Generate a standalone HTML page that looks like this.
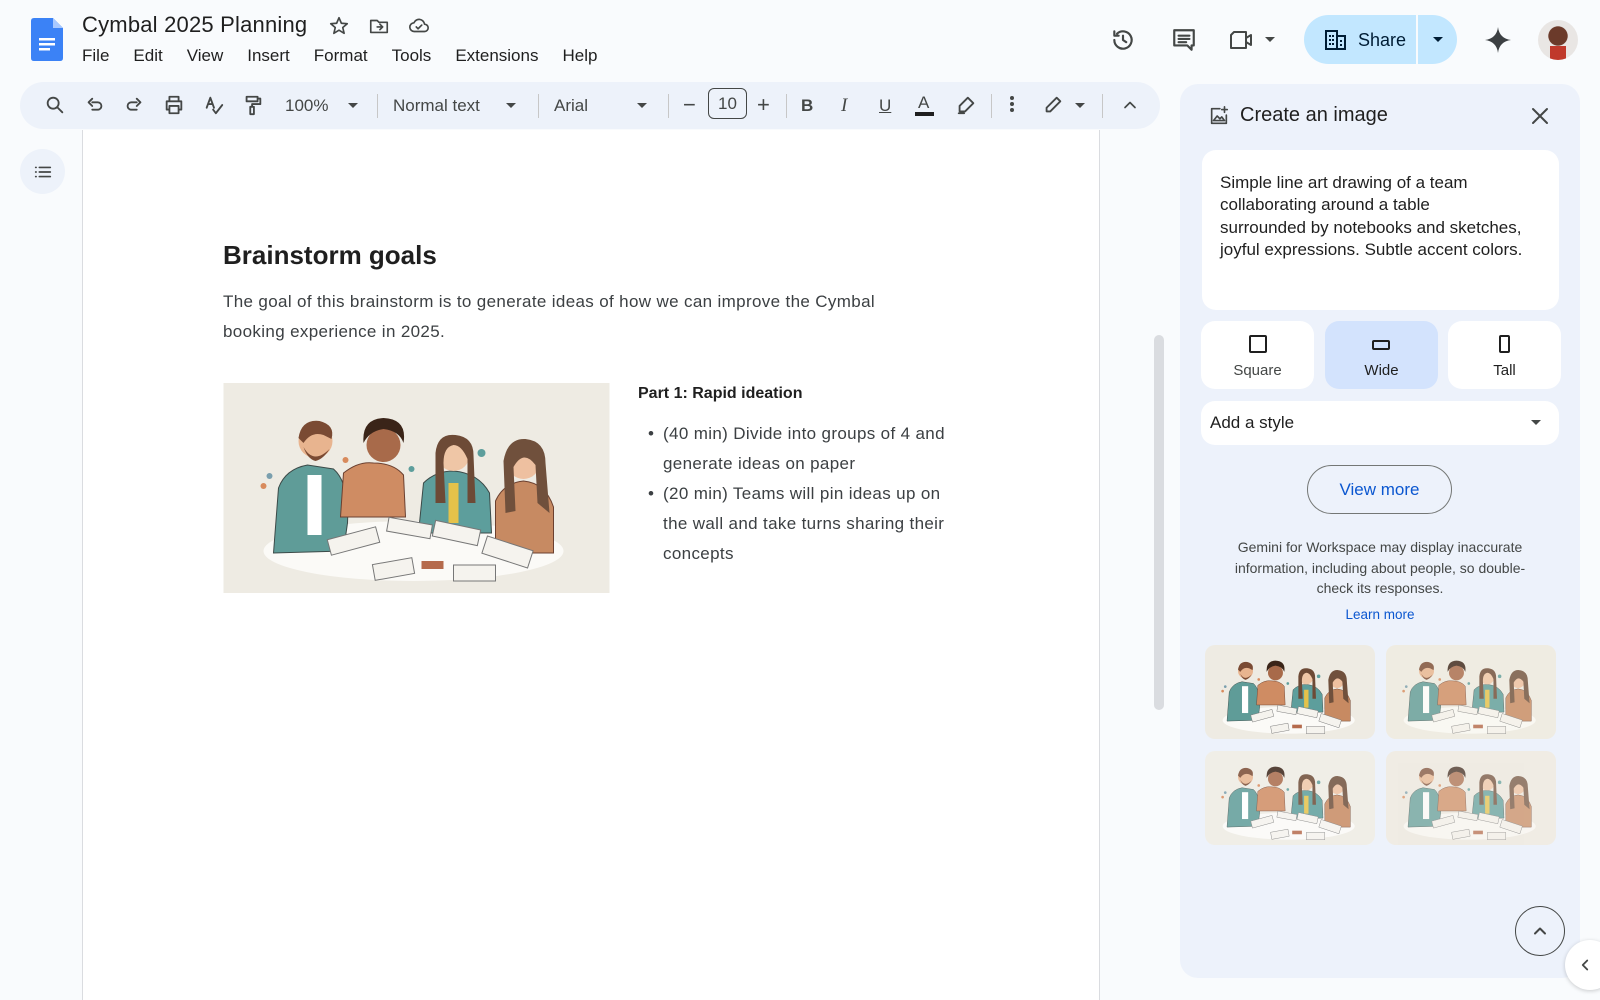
<!DOCTYPE html>
<html><head><meta charset="utf-8"><style>
*{box-sizing:border-box;margin:0;padding:0}
body{width:1600px;height:1000px;overflow:hidden;background:#f9fbfd;font-family:"Liberation Sans",Arial,sans-serif;color:#1f1f1f;position:relative}
.a{position:absolute}
.ic{position:absolute;fill:none;stroke:#444746;stroke-width:2;stroke-linecap:round;stroke-linejoin:round}
.menu span{margin-right:24px}
.tb{position:absolute;top:82px;left:20px;width:1140px;height:47px;background:#edf2fa;border-radius:24px}
.sep{position:absolute;top:12px;width:1px;height:24px;background:#c7c7c7}
.t{position:absolute;font-size:17px;color:#444746;top:14px}
.car{position:absolute;top:21px;width:0;height:0;border-left:5px solid transparent;border-right:5px solid transparent;border-top:5px solid #444746}
.doc{position:absolute;left:82px;top:130px;width:1018px;height:870px;background:#fff;border-left:1px solid #dadce0;border-right:1px solid #dadce0}
.p{font-size:17px;color:#3c4043;line-height:30px;letter-spacing:0.35px}
.panel{position:absolute;left:1180px;top:84px;width:400px;height:894px;background:#edf2fb;border-radius:18px}
.card{position:absolute;background:#fff;border-radius:14px}
.thumb{position:absolute;width:170px;height:94px;border-radius:10px;overflow:hidden}
</style></head><body>
<svg width="0" height="0" style="position:absolute"><defs>
<symbol id="scene" viewBox="0 0 386 210">
<rect width="386" height="210" fill="#eeebe3"/>
<ellipse cx="190" cy="168" rx="150" ry="30" fill="#fbfaf7"/>
<path d="M50 170 L55 105 Q62 86 84 82 L110 86 Q126 100 124 140 L120 168Z" fill="#5f9c98" stroke="#3c4a48"/>
<rect x="84" y="92" width="14" height="60" fill="#fff"/>
<circle cx="92" cy="58" r="17" fill="#e8b48f"/>
<path d="M75 55 Q78 36 96 38 Q112 42 108 56 L100 52 Q88 48 80 60Z" fill="#7a4a33"/>
<path d="M80 64 Q90 82 106 66 Q100 76 92 78 Q84 76 80 64Z" fill="#7a4a33"/>
<path d="M117 134 L120 90 Q135 78 150 80 Q170 80 180 92 L182 134Z" fill="#cf8c63" stroke="#6b4030"/>
<circle cx="160" cy="62" r="17" fill="#a86a4a"/>
<path d="M140 60 Q138 36 160 35 Q184 36 180 60 Q176 48 160 46 Q146 48 140 60Z" fill="#3a2418"/>
<path d="M195 150 L200 100 Q212 88 230 88 Q255 90 266 110 L268 150Z" fill="#5d9e9c" stroke="#3c4a48"/>
<rect x="225" y="100" width="10" height="40" fill="#e5c24a"/>
<circle cx="230" cy="72" r="16" fill="#efc6a6"/>
<path d="M212 120 L212 70 Q214 50 232 52 Q250 54 250 72 L252 120 L244 120 L244 76 Q238 62 230 62 Q220 64 220 80 L222 120Z" fill="#6d4a36"/>
<path d="M272 170 L272 118 Q280 100 300 98 Q322 100 330 124 L330 170Z" fill="#c78a62" stroke="#6b4030"/>
<circle cx="300" cy="80" r="16" fill="#eec0a0"/>
<path d="M282 130 L280 78 Q284 55 302 56 Q322 58 322 80 L326 130 L314 120 L312 82 Q300 66 290 84 L292 128Z" fill="#70503c"/>
<rect x="105" y="150" width="50" height="16" fill="#f5f3ee" stroke="#777" transform="rotate(-15 130 158)"/>
<rect x="164" y="138" width="44" height="14" fill="#f5f3ee" stroke="#777" transform="rotate(10 186 145)"/>
<rect x="210" y="142" width="46" height="16" fill="#f5f3ee" stroke="#777" transform="rotate(12 233 150)"/>
<rect x="150" y="178" width="40" height="16" fill="#f5f3ee" stroke="#777" transform="rotate(-10 170 186)"/>
<rect x="230" y="182" width="42" height="16" fill="#f5f3ee" stroke="#777"/>
<rect x="260" y="160" width="48" height="18" fill="#f5f3ee" stroke="#777" transform="rotate(18 284 169)"/>
<rect x="198" y="178" width="22" height="8" fill="#b56a4c"/>
<circle cx="46" cy="93" r="3" fill="#7a9fae"/><circle cx="40" cy="103" r="3" fill="#d88a5c"/><circle cx="122" cy="77" r="3" fill="#d88a5c"/><circle cx="188" cy="86" r="3" fill="#5d9e9c"/><circle cx="258" cy="70" r="4" fill="#5d9e9c"/>
</symbol>
</defs></svg>

<!-- header -->
<svg class="a" style="left:31px;top:18px" width="32" height="43" viewBox="0 0 32 43"><path d="M3 0H22L32 10V40Q32 43 29 43H3Q0 43 0 40V3Q0 0 3 0Z" fill="#3b82f6"/><path d="M22 0V10H32Z" fill="#a7c8ff"/><rect x="8" y="20" width="16" height="2.5" fill="#fff"/><rect x="8" y="25" width="16" height="2.5" fill="#fff"/><rect x="8" y="30" width="11" height="2.5" fill="#fff"/></svg>
<div class="a" style="left:82px;top:12px;font-size:22px;color:#1f1f1f;letter-spacing:0.2px">Cymbal 2025 Planning</div>
<svg class="ic" style="left:328px;top:15px" width="22" height="22" viewBox="0 0 24 24"><path d="M12 3l2.6 6 6.4.5-4.9 4.2 1.5 6.3L12 16.6 6.4 20l1.5-6.3L3 9.5l6.4-.5z" stroke-width="1.8"/></svg>
<svg class="ic" style="left:368px;top:15px" width="22" height="22" viewBox="0 0 24 24"><path d="M3 6h7l2 2h9v11H3z M10 13h6 M13 10l3 3-3 3" stroke-width="1.8"/></svg>
<svg class="ic" style="left:407px;top:15px" width="24" height="22" viewBox="0 0 24 24"><path d="M7 18h11a4 4 0 0 0 0-8 6 6 0 0 0-11.5-1.5A4.5 4.5 0 0 0 7 18z M9 13l2 2 4-4" stroke-width="1.8"/></svg>
<div class="a menu" style="left:82px;top:46px;font-size:17px;color:#1f1f1f"><span>File</span><span>Edit</span><span>View</span><span>Insert</span><span>Format</span><span>Tools</span><span>Extensions</span><span>Help</span></div>

<svg class="ic" style="left:1110px;top:27px" width="26" height="26" viewBox="0 0 24 24"><path d="M4 12a8 8 0 1 0 2.5-5.8 M4 4v4h4 M12 8v4l3 2"/></svg>
<svg class="ic" style="left:1171px;top:27px" width="26" height="26" viewBox="0 0 24 24"><path d="M3 3h18v14h-2v4l-4-4H3z M7 8h10 M7 11h10 M7 14h7"/></svg>
<svg class="ic" style="left:1228px;top:28px" width="28" height="24" viewBox="0 0 28 24"><path d="M6 4h12v16H3V7z M18 10l5-3v10l-5-3"/></svg>
<div class="car" style="left:1265px;top:37px"></div>
<div class="a" style="left:1304px;top:15px;width:153px;height:49px;background:#c2e7ff;border-radius:25px"></div>
<div class="a" style="left:1416px;top:15px;width:2px;height:49px;background:#f9fbfd"></div>
<svg class="a" style="left:1325px;top:30px" width="22" height="20" viewBox="0 0 22 20"><path d="M1 1h11v18H1z M12 6h8v13h-8" fill="none" stroke="#001d35" stroke-width="2"/><rect x="4" y="5" width="2" height="2" fill="#001d35"/><rect x="7" y="5" width="2" height="2" fill="#001d35"/><rect x="4" y="9" width="2" height="2" fill="#001d35"/><rect x="7" y="9" width="2" height="2" fill="#001d35"/><rect x="4" y="13" width="2" height="2" fill="#001d35"/><rect x="7" y="13" width="2" height="2" fill="#001d35"/><rect x="15" y="10" width="2" height="2" fill="#001d35"/><rect x="15" y="14" width="2" height="2" fill="#001d35"/></svg>
<div class="a" style="left:1358px;top:30px;font-size:18px;color:#001d35">Share</div>
<div class="car" style="left:1433px;top:37px;border-top-color:#001d35"></div>
<svg class="a" style="left:1485px;top:27px" width="26" height="26" viewBox="0 0 24 24"><path d="M12 0C12.8 7 17 11.2 24 12C17 12.8 12.8 17 12 24C11.2 17 7 12.8 0 12C7 11.2 11.2 7 12 0Z" fill="#3c4043"/></svg>
<div class="a" style="left:1538px;top:20px;width:40px;height:40px;border-radius:50%;background:radial-gradient(circle at 50% 40%,#6b3a2a 0 30%,#e9e6e4 32%);overflow:hidden"><div class="a" style="left:12px;top:26px;width:16px;height:14px;background:#c0392b"></div></div>

<!-- toolbar -->
<div class="tb">
<svg class="ic" style="left:24px;top:12px" width="22" height="22" viewBox="0 0 24 24"><circle cx="10" cy="10" r="6"/><path d="M15 15l5 5"/></svg>
<svg class="ic" style="left:64px;top:13px" width="22" height="22" viewBox="0 0 24 24"><path d="M9 8H15a4 4 0 0 1 0 8H9 M9 4L5 8l4 4"/></svg>
<svg class="ic" style="left:103px;top:13px" width="22" height="22" viewBox="0 0 24 24"><path d="M15 8H9a4 4 0 0 0 0 8h6 M15 4l4 4-4 4"/></svg>
<svg class="ic" style="left:143px;top:12px" width="22" height="22" viewBox="0 0 24 24"><path d="M7 8V3h10v5 M4 8h16v9h-3 M7 17H4V8 M7 13h10v8H7z"/></svg>
<svg class="ic" style="left:183px;top:12px" width="22" height="22" viewBox="0 0 24 24"><path d="M4 15L8 4l4 11 M5.5 11h5 M11 17l3 4 7-9"/></svg>
<svg class="ic" style="left:222px;top:11px" width="22" height="24" viewBox="0 0 24 24"><path d="M5 3h12v5H5z M17 5h3v6h-9v3 M9 14h4v8H9z"/></svg>
<div class="t" style="left:265px">100%</div><div class="car" style="left:328px"></div>
<div class="sep" style="left:357px"></div>
<div class="t" style="left:373px">Normal text</div><div class="car" style="left:486px"></div>
<div class="sep" style="left:518px"></div>
<div class="t" style="left:534px">Arial</div><div class="car" style="left:617px"></div>
<div class="sep" style="left:648px"></div>
<div class="t" style="left:663px;font-size:22px;top:10px">−</div>
<div class="a" style="left:688px;top:6px;width:39px;height:31px;border:1px solid #444746;border-radius:6px;font-size:17px;color:#444746;text-align:center;line-height:29px">10</div>
<div class="t" style="left:737px;font-size:22px;top:10px">+</div>
<div class="sep" style="left:766px"></div>
<div class="t" style="left:781px;font-weight:bold;color:#444746">B</div>
<div class="t" style="left:821px;font-style:italic;font-family:'Liberation Serif',serif;font-size:19px;top:13px">I</div>
<div class="t" style="left:859px;text-decoration:underline">U</div>
<div class="t" style="left:898px;top:11px">A</div><div class="a" style="left:895px;top:30px;width:19px;height:4px;background:#1f1f1f"></div>
<svg class="ic" style="left:935px;top:12px" width="22" height="22" viewBox="0 0 24 24"><path d="M14 4l6 6-9 9H5v-6z M4 21h6"/></svg>
<div class="sep" style="left:971px"></div>
<div class="a" style="left:990px;top:14px;width:4px;height:4px;border-radius:2px;background:#444746;box-shadow:0 6px #444746,0 12px #444746"></div>
<svg class="ic" style="left:1022px;top:12px" width="22" height="22" viewBox="0 0 24 24"><path d="M16 4l4 4L9 19H5v-4z"/></svg>
<div class="car" style="left:1055px"></div>
<div class="sep" style="left:1082px"></div>
<svg class="ic" style="left:1100px;top:13px" width="20" height="20" viewBox="0 0 24 24"><path d="M6 15l6-6 6 6"/></svg>
</div>

<div class="a" style="left:20px;top:149px;width:45px;height:45px;border-radius:50%;background:#edf2fa"></div>
<svg class="ic" style="left:32px;top:161px" width="22" height="22" viewBox="0 0 24 24"><path d="M8 7h12 M8 12h12 M8 17h12 M4 7h.5 M4 12h.5 M4 17h.5" stroke-width="1.8"/></svg>

<!-- doc -->
<div class="doc">
<div class="a" style="left:140px;top:110px;font-size:26px;font-weight:bold;color:#1f1f1f">Brainstorm goals</div>
<div class="a p" style="left:140px;top:157px;width:760px">The goal of this brainstorm is to generate ideas of how we can improve the Cymbal<br>booking experience in 2025.</div>
<svg class="a" style="left:140px;top:253px" width="387" height="210"><use href="#scene"/></svg>
<div class="a" style="left:555px;top:255px;font-size:16px;font-weight:bold;color:#1f1f1f">Part 1: Rapid ideation</div>
<div class="a p" style="left:565px;top:289px;width:300px">•</div>
<div class="a p" style="left:565px;top:349px">•</div>
<div class="a p" style="left:580px;top:289px;width:320px">(40 min) Divide into groups of 4 and<br>generate ideas on paper<br>(20 min) Teams will pin ideas up on<br>the wall and take turns sharing their<br>concepts</div>
</div>
<div class="a" style="left:1154px;top:335px;width:10px;height:375px;background:#dadce0;border-radius:5px"></div>

<!-- panel -->
<div class="panel">
<svg class="ic" style="left:28px;top:21px" width="22" height="22" viewBox="0 0 24 24"><path d="M13 4H4v16h16v-9 M6 17l4-5 3 3 2-2 3 4z M18 2v6 M15 5h6" stroke-width="1.8"/></svg>
<div class="a" style="left:60px;top:20px;font-size:20px;color:#1f1f1f">Create an image</div>
<svg class="ic" style="left:348px;top:20px" width="24" height="24" viewBox="0 0 24 24"><path d="M5 5l14 14 M19 5L5 19"/></svg>
<div class="card" style="left:22px;top:66px;width:357px;height:160px"></div>
<div class="a" style="left:40px;top:88px;font-size:17px;line-height:22.4px;color:#1f1f1f;width:330px">Simple line art drawing of a team<br>collaborating around a table<br>surrounded by notebooks and sketches,<br>joyful expressions. Subtle accent colors.</div>
<div class="card" style="left:21px;top:237px;width:113px;height:68px"></div>
<div class="card" style="left:145px;top:237px;width:113px;height:68px;background:#d3e3fd"></div>
<div class="card" style="left:268px;top:237px;width:113px;height:68px"></div>
<div class="a" style="left:69px;top:251px;width:18px;height:18px;border:2px solid #1f1f1f;border-radius:2px"></div>
<div class="a" style="left:192px;top:256px;width:18px;height:10px;border:2px solid #1f1f1f;border-radius:2px"></div>
<div class="a" style="left:319px;top:251px;width:11px;height:18px;border:2px solid #1f1f1f;border-radius:2px"></div>
<div class="a" style="left:21px;top:278px;width:113px;text-align:center;font-size:15px;color:#444746">Square</div>
<div class="a" style="left:145px;top:278px;width:113px;text-align:center;font-size:15px;color:#1f1f1f">Wide</div>
<div class="a" style="left:268px;top:278px;width:113px;text-align:center;font-size:15px;color:#1f1f1f">Tall</div>
<div class="card" style="left:21px;top:317px;width:358px;height:44px"></div>
<div class="a" style="left:30px;top:329px;font-size:17px;color:#1f1f1f">Add a style</div>
<div class="car" style="left:351px;top:336px;border-top-color:#444746"></div>
<div class="a" style="left:127px;top:381px;width:145px;height:49px;border:1px solid #747775;border-radius:25px;text-align:center;line-height:47px;font-size:17px;color:#0b57d0">View more</div>
<div class="a" style="left:38px;top:453px;width:324px;text-align:center;font-size:14px;line-height:20.5px;color:#444746">Gemini for Workspace may display inaccurate information, including about people, so double-check its responses.</div>
<div class="a" style="left:20px;top:523px;width:360px;text-align:center;font-size:13.5px;color:#0b57d0">Learn more</div>
<svg class="thumb" style="left:25px;top:561px" viewBox="0 0 386 210" preserveAspectRatio="none"><use href="#scene"/></svg>
<svg class="thumb" style="left:206px;top:561px" viewBox="0 0 386 210" preserveAspectRatio="none"><rect width="386" height="210" fill="#f6eee2"/><use href="#scene" opacity=".8"/></svg>
<svg class="thumb" style="left:25px;top:667px" viewBox="0 0 386 210" preserveAspectRatio="none"><rect width="386" height="210" fill="#fafafa"/><use href="#scene" opacity=".85"/></svg>
<svg class="thumb" style="left:206px;top:667px" viewBox="0 0 386 210" preserveAspectRatio="none"><rect width="386" height="210" fill="#f3eee6"/><use href="#scene" opacity=".7"/></svg>
<div class="a" style="left:335px;top:822px;width:50px;height:50px;border:1.5px solid #444746;border-radius:50%"></div>
<svg class="ic" style="left:350px;top:837px" width="20" height="20" viewBox="0 0 24 24"><path d="M6 15l6-6 6 6" stroke-width="2.4"/></svg>
</div>
<div class="a" style="left:1565px;top:940px;width:50px;height:50px;border-radius:50%;background:#fff;box-shadow:0 1px 4px rgba(0,0,0,.2)"></div>
<svg class="ic" style="left:1576px;top:956px" width="18" height="18" viewBox="0 0 24 24"><path d="M15 6l-6 6 6 6" stroke-width="2.4"/></svg>
</body></html>
